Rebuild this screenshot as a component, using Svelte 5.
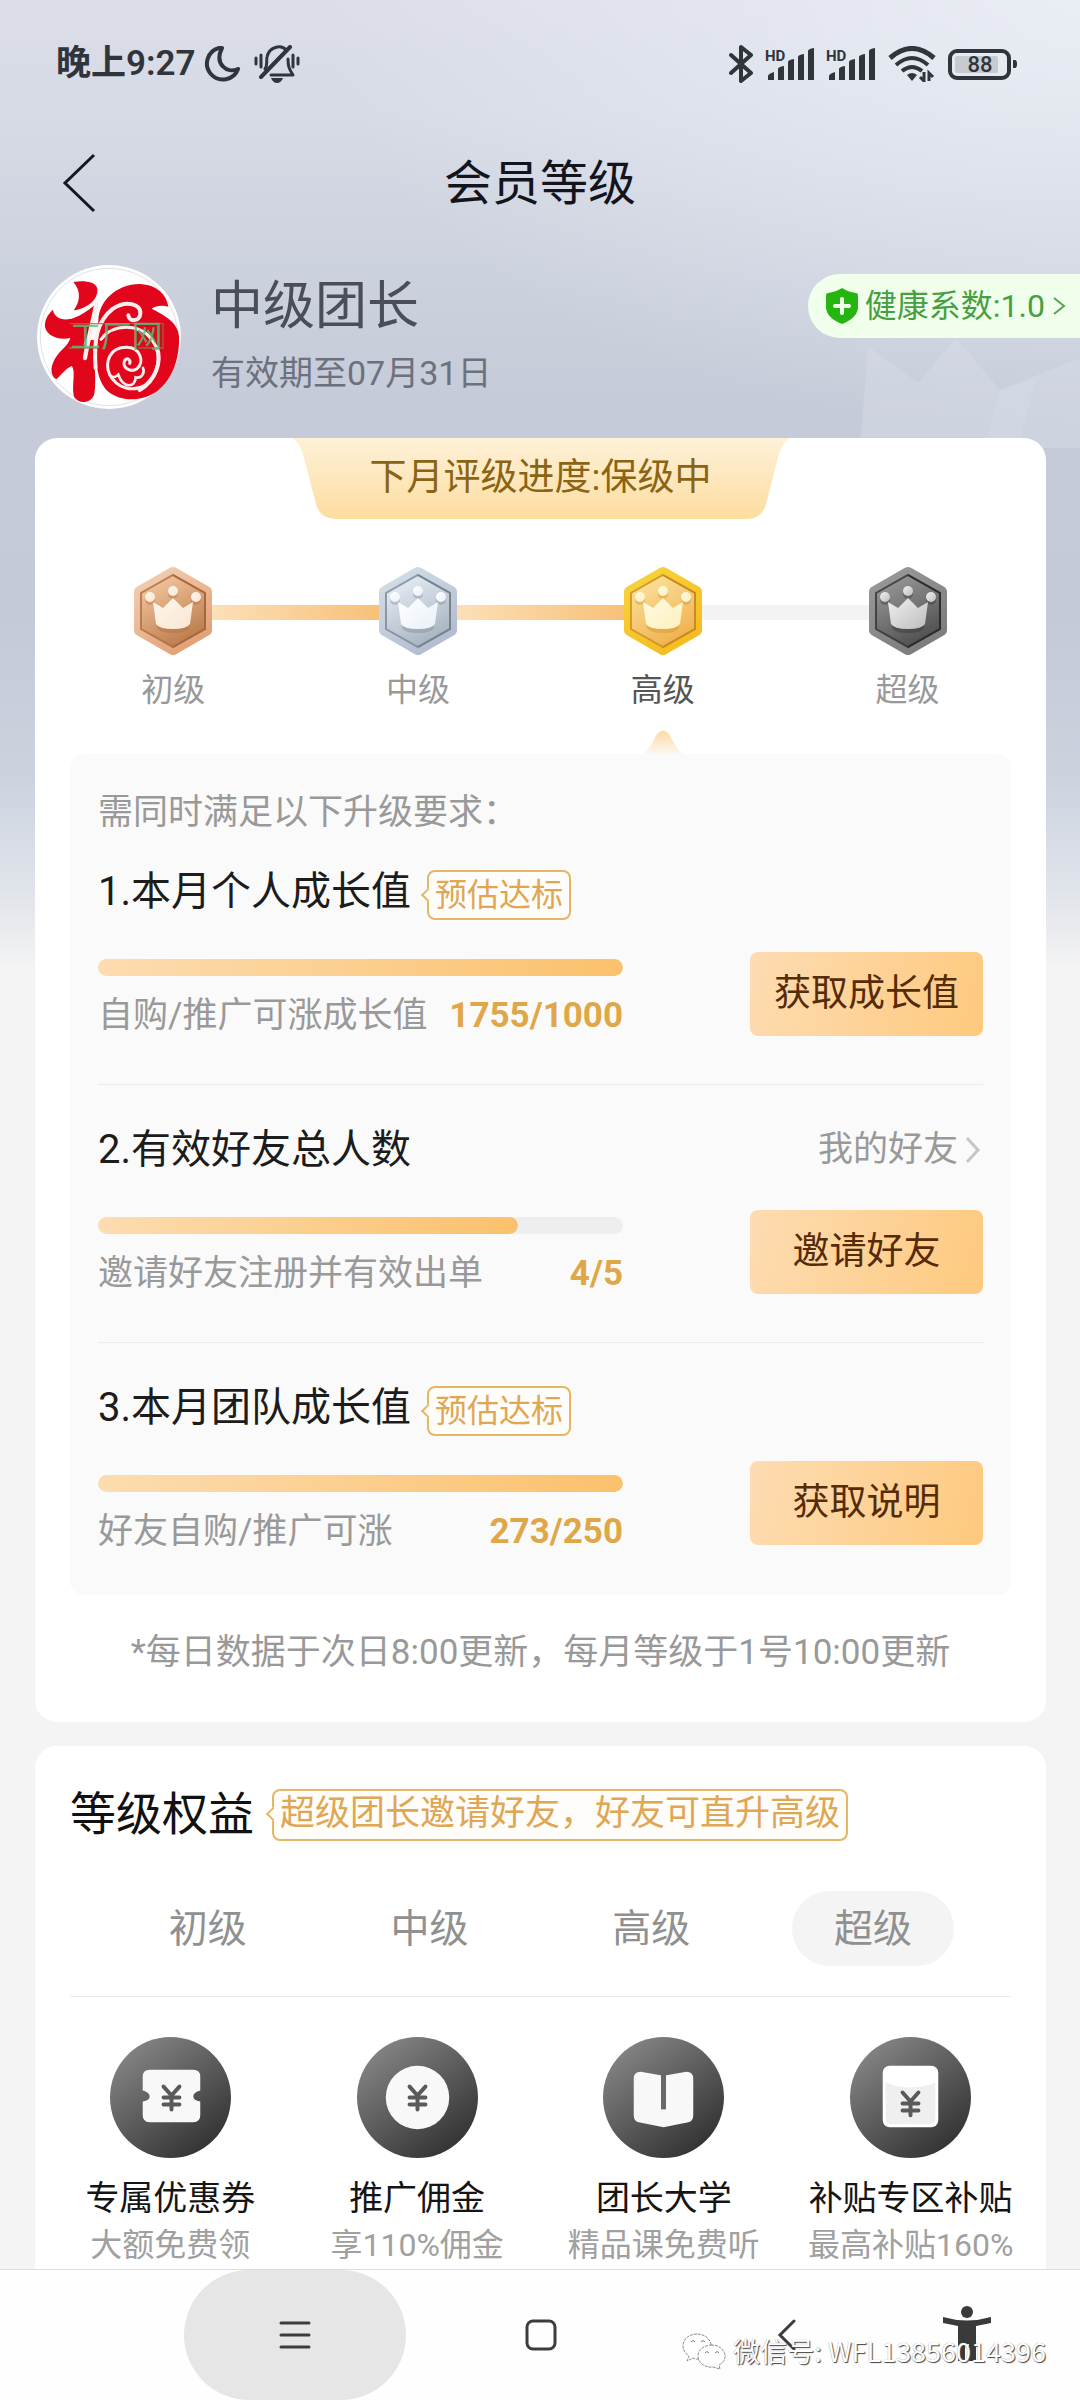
<script>
  const levels = [
    { name: '初级', id: 'bronze', rim: ['#f3d0b4', '#e3a379'], face: ['#f6c9a2', '#b97848'], edge: '#a8683f', crown: ['#fdf6ec', '#f9e6d2'], line: '' },
    { name: '中级', id: 'silver', rim: ['#d3dfe8', '#b5bdd2'], face: ['#e9eef8', '#a3b2bd'], edge: '#75838f', crown: ['#ffffff', '#e9f0f7'], line: 'done' },
    { name: '高级', id: 'gold', rim: ['#f8d33e', '#f4bd22'], face: ['#fbe3a0', '#f0ae4b'], edge: '#c98a1e', crown: ['#fffbe2', '#fdf0bd'], line: 'done last', active: true },
    { name: '超级', id: 'black', rim: ['#9a9a9a', '#7e7e7e'], face: ['#9b9b9b', '#4c4c4c'], edge: '#2c2c2c', crown: ['#f0f0f0', '#bdbdbd'], line: 'todo' }
  ];

  const tasks = [
    { title: '1.本月个人成长值', tag: '预估达标', desc: '自购/推广可涨成长值', value: '1755/1000', percent: 100, action: '获取成长值' },
    { title: '2.有效好友总人数', link: '我的好友', desc: '邀请好友注册并有效出单', value: '4/5', percent: 80, action: '邀请好友' },
    { title: '3.本月团队成长值', tag: '预估达标', desc: '好友自购/推广可涨', value: '273/250', percent: 100, action: '获取说明' }
  ];

  const tabs = ['初级', '中级', '高级', '超级'];
  let current = $state('超级');

  const benefits = [
    { icon: 'coupon', title: '专属优惠券', sub: '大额免费领' },
    { icon: 'coin', title: '推广佣金', sub: '享110%佣金' },
    { icon: 'book', title: '团长大学', sub: '精品课免费听' },
    { icon: 'packet', title: '补贴专区补贴', sub: '最高补贴160%' }
  ];
</script>

{#snippet signal()}
  <svg class="signal" viewBox="0 0 50 38" width="50" height="38" aria-hidden="true">
    <text x="0" y="16" class="hd">HD</text>
    <path d="M3 35v-4q0-2 6-4v8zM13 35V24q0-2 6-3v14zM23 35V17q0-2 6-3v21zM33 35V12q0-2 6-3v26zM43 35V6q0-2 6-3v32z" fill="#30343b" />
  </svg>
{/snippet}

{#snippet yen(x, y)}
  <path d="M{x - 8} {y - 11}l8 9l8-9M{x} {y - 2}v14M{x - 8} {y}h16M{x - 8} {y + 7}h16" fill="none" stroke="#5a5a5a" stroke-width="4" stroke-linecap="round" stroke-linejoin="round" />
{/snippet}

<div class="page">
  <svg class="crown-mark" viewBox="0 0 220 110" width="220" height="110" aria-hidden="true">
    <path d="M8 8L58 45L96 0L140 52L220 20V110H0Z" fill="#d9dee8" opacity=".4" />
    <path d="M140 52L176 40L158 110H124Z" fill="#dde2ea" opacity=".25" />
  </svg>

  <main>
    <div class="status">
      <span class="clock">晚上9:27</span>
      <svg class="moon" viewBox="0 0 36 36" width="36" height="36" aria-hidden="true">
        <path d="M15 2A16 16 0 1 0 34 23C23 28 10 18 18 2Z" fill="none" stroke="#30343b" stroke-width="4" stroke-linejoin="round" />
      </svg>
      <svg class="bell" viewBox="0 0 46 38" width="46" height="38" aria-hidden="true">
        <g fill="none" stroke="#30343b" stroke-width="3" stroke-linecap="round" stroke-linejoin="round">
          <path d="M11 24C14 20 12 16 13 12C15 2 27 -1 32 5M34 14C34 21 35 24 39 30H17" />
          <path d="M36 2L7 32" stroke-width="4" />
          <path d="M2 13v6M7 10v12M39 10v12M44 13v6" />
        </g>
        <path d="M17 33h12q-2 5-6 5t-6-5z" fill="#30343b" />
      </svg>
      <span class="grow"></span>
      <svg class="bt" viewBox="0 0 26 38" width="26" height="38" aria-hidden="true">
        <path d="M3 10L23 28L13 36V2L23 10L3 28" fill="none" stroke="#30343b" stroke-width="4" stroke-linejoin="round" stroke-linecap="round" />
      </svg>
      {@render signal()}
      {@render signal()}
      <svg class="wifi" viewBox="0 0 48 36" width="48" height="36" aria-hidden="true">
        <g fill="none" stroke="#30343b" stroke-width="4">
          <path d="M2 12Q24 -7 46 12" stroke-width="5" />
          <path d="M8 19Q24 5 40 19" />
          <path d="M14 25Q24 17 34 25" />
        </g>
        <path d="M19 29q5-4 10 0l-5 6z" fill="#30343b" />
        <path d="M36 26v9l-4-4M41 35v-8l4 4" fill="none" stroke="#30343b" stroke-width="3" />
      </svg>
      <svg class="battery" viewBox="0 0 70 32" width="70" height="32" aria-hidden="true">
        <rect x="2" y="3" width="59" height="27" rx="7" fill="none" stroke="#30343b" stroke-width="4" />
        <rect x="7" y="8" width="43" height="17" rx="2" fill="#c7cad1" />
        <path d="M65 12h2q2 0 2 4t-2 4h-2z" fill="#30343b" />
        <text x="32" y="24" text-anchor="middle" class="level">88</text>
      </svg>
    </div>

    <header>
      <button class="back" aria-label="返回">
        <svg viewBox="0 0 34 60" width="34" height="60"><path d="M32 2L3 30L32 58" fill="none" stroke="#15181f" stroke-width="3" /></svg>
      </button>
      <h1>会员等级</h1>
    </header>

    <section class="profile">
      <svg class="avatar" viewBox="22 21 432 432" width="144" height="144" role="img" aria-label="头像">
        <circle cx="238" cy="237" r="216" fill="#fff" />
        <circle cx="238" cy="237" r="206" fill="#fff" stroke="#ccd3d8" stroke-width="2" />
        <g fill="#e2061c">
          <path d="M131 72C165 66 200 72 203 92C206 122 178 150 132 157C152 130 155 100 131 72Z" />
          <path d="M70 155C72 178 100 192 132 180C155 172 172 160 194 142C204 190 182 225 160 262C184 240 196 240 196 262C190 310 202 360 194 408C186 436 148 440 134 418C124 388 140 340 126 324C110 330 96 350 80 364C58 350 62 318 84 290C98 272 116 262 122 240C90 248 54 236 46 208C44 188 54 168 70 155Z" />
          <path d="M206 190C206 130 260 78 330 78C380 80 410 108 416 146C400 142 380 142 366 152C396 168 446 190 448 236C450 300 430 360 384 398C340 430 280 432 240 404C200 376 196 300 200 250Z" />
        </g>
        <g fill="none" stroke="#fdeeee" stroke-linecap="round">
          <path d="M200 138C190 190 176 240 166 300" stroke-width="13" />
          <path d="M198 330C192 250 200 190 250 152C290 126 334 138 332 166C330 190 300 194 296 172" stroke-width="12" />
          <path d="M214 244C250 196 330 196 366 244C400 290 388 350 346 382C308 404 262 390 240 350C224 312 240 268 290 268C332 268 346 312 322 332C300 346 274 326 286 306C294 298 304 306 300 316" stroke-width="9" />
          <path d="M382 270C396 310 380 366 330 396" stroke-width="12" />
          <path d="M240 350C250 366 266 350 266 350C280 392 318 390 318 358C336 362 346 344 340 330" stroke-width="8" />
        </g>
        <g fill="none" stroke="#8a7a4a" stroke-width="4" opacity=".8"><path d="M120 197H400V270H326M116 270H206" /></g>
        <text x="122" y="266" class="seal">工厂网</text>
      </svg>
      <div class="who">
        <strong>中级团长</strong>
        <span>有效期至07月31日</span>
      </div>
      <a class="health" href="#health">
        <svg viewBox="0 0 32 36" width="32" height="36" aria-hidden="true">
          <path d="M16 0Q22 4 30 5Q32 5 32 8V20Q31 30 16 36Q1 30 0 20V8Q0 5 2 5Q10 4 16 0Z" fill="#26b510" />
          <path d="M16 11v14M9 18h14" stroke="#f0ffec" stroke-width="4" stroke-linecap="round" />
        </svg>
        <span>健康系数:1.0</span>
        <svg viewBox="0 0 14 20" width="14" height="20" aria-hidden="true"><path d="M2 2L12 10L2 18" fill="none" stroke="#57a352" stroke-width="2" /></svg>
      </a>
    </section>

    <section class="card progress">
      <div class="banner">
        <svg viewBox="0 0 498 81" width="498" height="81" aria-hidden="true">
          <defs>
            <linearGradient id="banner" x1="0" y1="0" x2="0" y2="1"><stop offset="0" stop-color="#fef1d8" /><stop offset="1" stop-color="#fddd9f" /></linearGradient>
          </defs>
          <path d="M0 0H498Q490 5 487 16L474 66Q470 81 454 81H44Q28 81 24 66L11 16Q8 5 0 0Z" fill="url(#banner)" />
        </svg>
        <h2>下月评级进度:保级中</h2>
      </div>

      <ol class="levels">
        {#each levels as l}
          <li class={l.line} class:active={l.active}>
            <svg class="badge" viewBox="0 0 80 90" width="80" height="90" aria-hidden="true">
              <defs>
                <linearGradient id="{l.id}-rim" x1="0" y1="0" x2=".6" y2="1"><stop offset="0" stop-color={l.rim[0]} /><stop offset="1" stop-color={l.rim[1]} /></linearGradient>
                <linearGradient id="{l.id}-face" x1=".2" y1="0" x2=".7" y2="1"><stop offset="0" stop-color={l.face[0]} /><stop offset="1" stop-color={l.face[1]} /></linearGradient>
                <linearGradient id="{l.id}-crown" x1="0" y1="0" x2="1" y2="1"><stop offset="0" stop-color={l.crown[0]} /><stop offset="1" stop-color={l.crown[1]} /></linearGradient>
              </defs>
              <path d="M40 7L73 26V64L40 83L7 64V26Z" fill="url(#{l.id}-rim)" stroke="url(#{l.id}-rim)" stroke-width="12" stroke-linejoin="round" />
              <path d="M40 9L72 27V63L40 81L8 63V27Z" fill="url(#{l.id}-face)" stroke={l.edge} stroke-opacity=".75" stroke-width="2" />
              <path d="M40 9L72 27V63L40 81" fill="none" stroke={l.edge} stroke-width="2" />
              <g fill={l.edge} opacity=".35" transform="translate(0 3)">
                <circle cx="17" cy="31" r="5" /><circle cx="40" cy="25" r="5" /><circle cx="63" cy="31" r="5" />
                <path d="M21 37L30 42L40 32L50 42L59 37L56 59Q54 64 40 64T24 59Z" />
              </g>
              <g fill="url(#{l.id}-crown)">
                <circle cx="17" cy="31" r="5" /><circle cx="40" cy="25" r="5" /><circle cx="63" cy="31" r="5" />
                <path d="M20 36L30 42L40 32L50 42L60 36L57 58Q54 63 40 63T23 58Z" />
              </g>
            </svg>
            <span>{l.name}</span>
            {#if l.active}
              <svg class="pointer" viewBox="0 0 40 24" width="40" height="24" aria-hidden="true">
                <defs><linearGradient id="pointer" x1="0" y1="0" x2="0" y2="1"><stop offset="0" stop-color="#fcd9a4" /><stop offset="1" stop-color="#fcf8f1" /></linearGradient></defs>
                <path d="M0 24Q4 22 8 15L14 4Q20 -3 26 4L32 15Q36 22 40 24Z" fill="url(#pointer)" />
              </svg>
            {/if}
          </li>
        {/each}
      </ol>

      <div class="panel">
        <p class="intro">需同时满足以下升级要求：</p>
        {#each tasks as t}
          <article>
            <div class="head">
              <h3>{t.title}</h3>
              {#if t.tag}<span class="tag small">{t.tag}</span>{/if}
              {#if t.link}
                <a href="#friends">{t.link}
                  <svg viewBox="0 0 16 28" width="16" height="28" aria-hidden="true"><path d="M2 2L13 14L2 26" fill="none" stroke="#c6c6c6" stroke-width="3" /></svg>
                </a>
              {/if}
            </div>
            <div class="body">
              <div class="meter">
                <div class="track"><div class="fill" style="width: {t.percent}%"></div></div>
                <div class="legend"><span>{t.desc}</span><b>{t.value}</b></div>
              </div>
              <button>{t.action}</button>
            </div>
          </article>
        {/each}
      </div>
      <p class="note">*每日数据于次日8:00更新，每月等级于1号10:00更新</p>
    </section>

    <section class="card rights">
      <div class="rights-head">
        <h2>等级权益</h2>
        <span class="tag wide">超级团长邀请好友，好友可直升高级</span>
      </div>
      <div class="tabs" role="tablist">
        {#each tabs as t}
          <button role="tab" aria-selected={current === t} class:on={current === t} onclick={() => (current = t)}>{t}</button>
        {/each}
      </div>
      <ul class="benefits">
        {#each benefits as b}
          <li>
            <svg viewBox="0 0 122 122" width="121" height="121" aria-hidden="true">
              <defs><linearGradient id="disc-{b.icon}" x1=".15" y1=".1" x2=".8" y2=".95"><stop offset="0" stop-color="#838383" /><stop offset="1" stop-color="#323232" /></linearGradient></defs>
              <circle cx="61" cy="61" r="61" fill="url(#disc-{b.icon})" />
              {#if b.icon === 'coupon'}
                <path d="M40 33H84Q91 33 91 40V54Q84 56 84 60T91 65V79Q91 86 84 86H40Q33 86 33 79V65Q40 64 40 60T33 54V40Q33 33 40 33Z" fill="#f8f8f8" />
                {@render yen(62, 61)}
              {:else if b.icon === 'coin'}
                <circle cx="61" cy="61" r="32" fill="#f8f8f8" />
                {@render yen(61, 61)}
              {:else if b.icon === 'book'}
                <path d="M38 35L61 39L84 35Q91 35 91 42V79Q91 85 86 86L61 91L36 86Q31 85 31 79V42Q31 35 38 35Z" fill="#f8f8f8" />
                <path d="M61 38V73" stroke="#686868" stroke-width="5" />
              {:else}
                <rect x="33" y="29" width="56" height="62" rx="7" fill="#fff" />
                <path d="M36 46Q61 56 86 46V82Q86 88 80 88H42Q36 88 36 82Z" fill="#efefef" />
                {@render yen(61, 67)}
              {/if}
            </svg>
            <strong>{b.title}</strong>
            <span>{b.sub}</span>
          </li>
        {/each}
      </ul>
    </section>
  </main>

  <nav>
    <span></span>
    <button class="pressed" aria-label="菜单">
      <svg viewBox="0 0 32 30" width="32" height="30"><path d="M2 3H30M2 15H30M2 27H30" stroke="#3c3c3c" stroke-width="3" stroke-linecap="round" /></svg>
    </button>
    <button aria-label="主屏幕">
      <svg viewBox="0 0 32 32" width="32" height="32"><rect x="2" y="2" width="28" height="28" rx="6" fill="none" stroke="#3c3c3c" stroke-width="3" /></svg>
    </button>
    <button aria-label="返回上一页">
      <svg viewBox="0 0 20 32" width="20" height="32"><path d="M17 2L3 16L17 30" fill="none" stroke="#3c3c3c" stroke-width="3" stroke-linecap="round" /></svg>
    </button>
    <button class="access" aria-label="无障碍">
      <svg viewBox="0 0 50 56" width="50" height="56"><circle cx="25" cy="6" r="6" fill="#3a3a3a" /><path d="M1 11Q25 18 49 11V17L34 20V55H27V38H23V55H16V20L1 17Z" fill="#3a3a3a" /></svg>
    </button>
    <div class="watermark">
      <svg viewBox="0 0 44 38" width="44" height="38" aria-hidden="true">
        <g fill="#fff" stroke="#8a8a8a" stroke-width="1" stroke-dasharray="3 1">
          <path d="M15 2C6 2 1 8 1 14C1 19 4 22 7 24L5 29L11 26Q15 28 20 27C28 25 30 18 29 12C27 5 21 2 15 2Z" />
          <path d="M30 13C22 13 16 18 16 24C16 31 23 36 31 35L38 37L37 33C41 31 43 28 43 24C43 18 37 13 30 13Z" />
        </g>
        <g fill="none" stroke="#777" stroke-width="1"><path d="M9 10q2-3 4 0M19 10q2-3 4 0M23 21q2-3 4 0M33 21q2-3 4 0" /></g>
      </svg>
      <span>微信号: WFL13856014396</span>
    </div>
  </nav>
</div>

<style>
  :global(body) {
    margin: 0;
    background: #f4f4f4;
    font-family: Roboto, 'Noto Sans CJK SC', sans-serif;
    color: #1a1a1a;
  }
  h1, h2, h3, p, ol, ul { margin: 0; padding: 0; font-weight: 400; list-style: none; }
  button { border: 0; padding: 0; margin: 0; background: none; font: inherit; color: inherit; cursor: pointer; }
  a { color: inherit; text-decoration: none; }
  svg { display: block; flex: none; }

  .page {
    position: relative;
    display: flex;
    flex-direction: column;
    height: 100vh;
    overflow: hidden;
    background:
      radial-gradient(ellipse 760px 440px at 100% 0, rgba(238, 242, 248, .75), rgba(238, 242, 248, 0)),
      linear-gradient(180deg, #dcdde8 0, #d6dbe5 110px, #cfd4e0 220px, #c5cbd8 400px, #c4cad8 620px, #ccd3df 780px, #e0e3ea 890px, #f4f4f4 970px);
  }
  .crown-mark { position: absolute; right: 0; top: 338px; }
  main { position: relative; flex: 1; min-height: 0; overflow: hidden; }

  .status { display: flex; align-items: center; height: 128px; padding: 0 62px 0 56px; color: #30343b; }
  .clock { font-size: 35px; font-weight: 600; line-height: 40px; }
  .moon { margin-left: 8px; }
  .bell { margin-left: 14px; }
  .grow { flex: 1; }
  .signal { margin-left: 11px; }
  .wifi { margin-left: 12px; }
  .battery { margin-left: 12px; }
  .hd { font: 700 15px Roboto, sans-serif; fill: #30343b; }
  .level { font: 500 22px Roboto, sans-serif; fill: #30343b; }

  header { display: grid; grid-template-columns: 100px 1fr 100px; align-items: center; height: 110px; }
  .back { justify-self: end; padding-right: 4px; }
  h1 { padding-top: 2px; font-size: 48px; line-height: 64px; text-align: center; color: #12151d; }

  .profile { display: flex; align-items: center; padding: 27px 0 29px 37px; }
  .seal { font: 92px 'Noto Sans CJK SC', sans-serif; fill: #4fc47a; opacity: .8; }
  .who { display: flex; flex-direction: column; margin-left: 30px; padding-top: 4px; }
  .who strong { font-size: 52px; font-weight: 400; line-height: 68px; color: #4b4e59; }
  .who span { font-size: 34px; line-height: 64px; color: #6d717d; }
  .health {
    display: flex; align-items: center; align-self: flex-start; box-sizing: border-box;
    height: 64px; margin: 9px 0 0 auto; padding: 0 14px 0 18px;
    border-radius: 32px 0 0 32px; background: #f0ffec; color: #489f42; font-size: 32px; line-height: 48px;
  }
  .health span { margin: 0 7px; }

  .card { margin: 0 34px 24px 35px; border-radius: 22px; background: #fff; }
  .progress { padding: 0 35px 46px; }
  .banner { display: grid; justify-items: center; align-items: center; }
  .banner > * { grid-area: 1 / 1; }
  .banner h2 { padding-bottom: 2px; font-size: 37px; line-height: 48px; color: #8a6414; }

  .levels { display: grid; grid-template-columns: repeat(4, 1fr); margin: 47px -19px 41px; isolation: isolate; }
  .levels li { position: relative; display: flex; flex-direction: column; align-items: center; color: #999; }
  .levels span { margin-top: 11px; font-size: 32px; line-height: 46px; }
  .levels .active { color: #555; }
  .levels .done::before, .levels .todo::before {
    content: ''; position: absolute; z-index: -1; top: 39px; left: -50%; width: 100%; height: 15px;
  }
  .levels .done::before { background: linear-gradient(90deg, #fce0b8 15%, #f8c078 85%); }
  .levels .todo::before { background: #f3f3f3; }
  .pointer { position: absolute; bottom: -41px; }

  .panel { padding: 37px 28px 40px; border-radius: 14px; background: #fafafa; }
  .intro { font-size: 35px; line-height: 44px; color: #999; }
  article { padding: 35px 0 45px; border-bottom: 1px solid #ececec; }
  article:nth-of-type(1) { padding-top: 27px; }
  article:last-child { padding-bottom: 0; border: 0; }
  .head { display: flex; align-items: center; }
  h3 { font-size: 40px; line-height: 60px; color: #1c1c1c; }
  .head a { display: flex; align-items: center; gap: 7px; margin-left: auto; padding-right: 2px; font-size: 35px; line-height: 46px; color: #999; }
  .tag {
    position: relative; box-sizing: border-box; height: 50px; margin-left: 18px; padding: 0 6px;
    border: 2px solid #e5b765; border-radius: 8px; background: #fffdf9;
    color: #dfa653; white-space: nowrap;
  }
  .tag::before {
    content: ''; position: absolute; left: -6px; top: 18px; width: 8px; height: 8px;
    border: solid #e5b765; border-width: 0 0 2px 2px; background: #fffdf9; transform: rotate(45deg);
  }
  .small { margin: 6px 0 0 16px; font-size: 32px; line-height: 46px; }
  .wide { height: 52px; margin-top: 2px; font-size: 35px; line-height: 46px; }
  .body { display: flex; align-items: flex-start; justify-content: space-between; }
  .meter { flex: 0 1 525px; padding-top: 37px; }
  .track { height: 17px; border-radius: 9px; background: #eee; overflow: hidden; }
  .fill { height: 100%; border-radius: 9px; background: linear-gradient(90deg, #fcdcb0, #fbc16c); }
  .legend { display: flex; justify-content: space-between; margin-top: 17px; font-size: 35px; line-height: 46px; color: #999; }
  .legend b { font-weight: 700; color: #e0a748; }
  .body button {
    width: 233px; height: 84px; margin-top: 30px; border-radius: 8px;
    background: linear-gradient(105deg, #fddcb2, #fec97e); color: #552b08; font-size: 37px; line-height: 48px;
  }
  article:last-child button { margin-top: 23px; }
  .note { margin-top: 35px; font-size: 35px; line-height: 46px; text-align: center; color: #999; }

  .rights { padding: 35px 0 40px; }
  .rights-head { display: flex; align-items: center; padding: 0 35px; }
  .rights-head h2 { font-size: 46px; line-height: 66px; color: #111; }
  .tabs { display: grid; grid-template-columns: repeat(4, 1fr); justify-items: center; margin: 44px 35px 0; padding: 0 27px 30px; border-bottom: 1px solid #ebebeb; }
  .tabs button { width: 162px; height: 75px; border-radius: 38px; font-size: 39px; line-height: 56px; color: #909090; }
  .tabs .on { background: #f4f4f4; }
  .benefits { display: grid; grid-template-columns: repeat(4, 1fr); padding: 40px 12px 0; }
  .benefits li { display: flex; flex-direction: column; align-items: center; }
  .benefits strong { margin-top: 17px; font-size: 34px; font-weight: 400; line-height: 47px; color: #151515; white-space: nowrap; }
  .benefits span { font-size: 32px; line-height: 46px; color: #a0a0a0; white-space: nowrap; }

  nav {
    position: relative; flex: none; display: grid; grid-template-columns: 172fr 246fr 246fr 246fr 114fr 56fr;
    height: 130px; background: #fefefe; box-shadow: 0 -1px #ddd;
  }
  nav button { display: grid; place-items: center; }
  nav .pressed { justify-self: center; width: 222px; border-radius: 65px; background: #e6e6e6; }
  nav .access { padding-bottom: 2px; }
  .watermark { position: absolute; right: 34px; bottom: 30px; display: flex; align-items: center; gap: 7px; }
  .watermark span {
    font: 27px/36px 'Noto Sans CJK SC', sans-serif; color: #fff; white-space: nowrap;
    text-shadow: 1px 1px 1px #444, 0 0 1px #999;
  }
</style>
